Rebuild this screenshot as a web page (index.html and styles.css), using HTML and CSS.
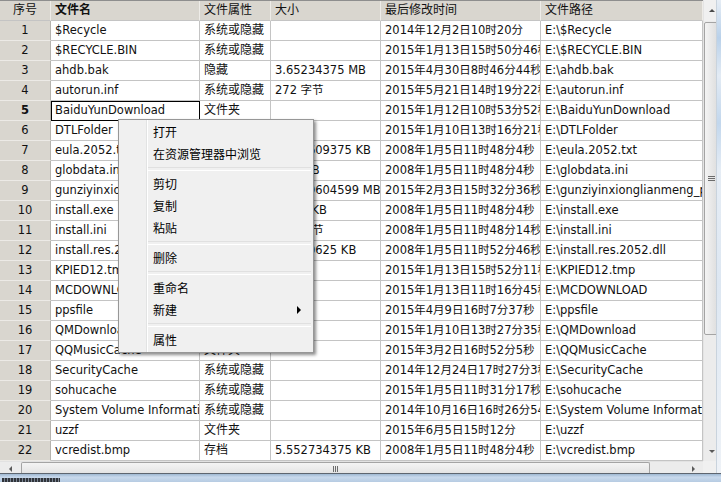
FILE: index.html
```html
<!DOCTYPE html>
<html lang="zh-CN">
<head>
<meta charset="utf-8">
<title>文件列表</title>
<link rel="stylesheet" href="styles.css">
</head>
<body>
<div class="window">
  <div class="grid">
    <div class="row head">
      <div class="cell no">序号</div>
      <div class="cell name bold">文件名</div>
      <div class="cell">文件属性</div>
      <div class="cell">大小</div>
      <div class="cell">最后修改时间</div>
      <div class="cell">文件路径</div>
    </div>
    <div class="row"><div class="cell no">1</div><div class="cell">$Recycle</div><div class="cell attr">系统或隐藏</div><div class="cell"></div><div class="cell">2014年12月2日10时20分</div><div class="cell">E:\$Recycle</div></div>
    <div class="row"><div class="cell no">2</div><div class="cell">$RECYCLE.BIN</div><div class="cell attr">系统或隐藏</div><div class="cell"></div><div class="cell">2015年1月13日15时50分46秒</div><div class="cell">E:\$RECYCLE.BIN</div></div>
    <div class="row"><div class="cell no">3</div><div class="cell">ahdb.bak</div><div class="cell attr">隐藏</div><div class="cell">3.65234375 MB</div><div class="cell">2015年4月30日8时46分44秒</div><div class="cell">E:\ahdb.bak</div></div>
    <div class="row"><div class="cell no">4</div><div class="cell">autorun.inf</div><div class="cell attr">系统或隐藏</div><div class="cell">272 字节</div><div class="cell">2015年5月21日14时19分22秒</div><div class="cell">E:\autorun.inf</div></div>
    <div class="row"><div class="cell no bold">5</div><div class="cell focus">BaiduYunDownload</div><div class="cell attr">文件夹</div><div class="cell"></div><div class="cell">2015年1月12日10时53分52秒</div><div class="cell">E:\BaiduYunDownload</div></div>
    <div class="row"><div class="cell no">6</div><div class="cell">DTLFolder</div><div class="cell attr">文件夹</div><div class="cell"></div><div class="cell">2015年1月10日13时16分21秒</div><div class="cell">E:\DTLFolder</div></div>
    <div class="row"><div class="cell no">7</div><div class="cell">eula.2052.txt</div><div class="cell attr">存档</div><div class="cell">2.512609375 KB</div><div class="cell">2008年1月5日11时48分4秒</div><div class="cell">E:\eula.2052.txt</div></div>
    <div class="row"><div class="cell no">8</div><div class="cell">globdata.ini</div><div class="cell attr">存档</div><div class="cell">3.12 KB</div><div class="cell">2008年1月5日11时48分4秒</div><div class="cell">E:\globdata.ini</div></div>
    <div class="row"><div class="cell no">9</div><div class="cell">gunziyinxionglianmeng_pc.exe</div><div class="cell attr">存档</div><div class="cell">4.8729604599 MB</div><div class="cell">2015年2月3日15时32分36秒</div><div class="cell">E:\gunziyinxionglianmeng_pc.exe</div></div>
    <div class="row"><div class="cell no">10</div><div class="cell">install.exe</div><div class="cell attr">存档</div><div class="cell">136.5 KB</div><div class="cell">2008年1月5日11时48分4秒</div><div class="cell">E:\install.exe</div></div>
    <div class="row"><div class="cell no">11</div><div class="cell">install.ini</div><div class="cell attr">存档</div><div class="cell">194 字节</div><div class="cell">2008年1月5日11时48分14秒</div><div class="cell">E:\install.ini</div></div>
    <div class="row"><div class="cell no">12</div><div class="cell">install.res.2052.dll</div><div class="cell attr">存档</div><div class="cell">1.0390625 KB</div><div class="cell">2008年1月5日11时52分46秒</div><div class="cell">E:\install.res.2052.dll</div></div>
    <div class="row"><div class="cell no">13</div><div class="cell">KPIED12.tmp</div><div class="cell attr">存档</div><div class="cell"></div><div class="cell">2015年1月13日15时52分11秒</div><div class="cell">E:\KPIED12.tmp</div></div>
    <div class="row"><div class="cell no">14</div><div class="cell">MCDOWNLOAD</div><div class="cell attr">文件夹</div><div class="cell"></div><div class="cell">2015年1月13日11时16分45秒</div><div class="cell">E:\MCDOWNLOAD</div></div>
    <div class="row"><div class="cell no">15</div><div class="cell">ppsfile</div><div class="cell attr">文件夹</div><div class="cell"></div><div class="cell">2015年4月9日16时7分37秒</div><div class="cell">E:\ppsfile</div></div>
    <div class="row"><div class="cell no">16</div><div class="cell">QMDownload</div><div class="cell attr">文件夹</div><div class="cell"></div><div class="cell">2015年1月10日13时27分35秒</div><div class="cell">E:\QMDownload</div></div>
    <div class="row"><div class="cell no">17</div><div class="cell">QQMusicCache</div><div class="cell attr">文件夹</div><div class="cell"></div><div class="cell">2015年3月2日16时52分5秒</div><div class="cell">E:\QQMusicCache</div></div>
    <div class="row"><div class="cell no">18</div><div class="cell">SecurityCache</div><div class="cell attr">系统或隐藏</div><div class="cell"></div><div class="cell">2014年12月24日17时27分3秒</div><div class="cell">E:\SecurityCache</div></div>
    <div class="row"><div class="cell no">19</div><div class="cell">sohucache</div><div class="cell attr">系统或隐藏</div><div class="cell"></div><div class="cell">2015年1月5日11时31分17秒</div><div class="cell">E:\sohucache</div></div>
    <div class="row"><div class="cell no">20</div><div class="cell">System Volume Information</div><div class="cell attr">系统或隐藏</div><div class="cell"></div><div class="cell">2014年10月16日16时26分54秒</div><div class="cell">E:\System Volume Information</div></div>
    <div class="row"><div class="cell no">21</div><div class="cell">uzzf</div><div class="cell attr">文件夹</div><div class="cell"></div><div class="cell">2015年6月5日15时12分</div><div class="cell">E:\uzzf</div></div>
    <div class="row"><div class="cell no">22</div><div class="cell">vcredist.bmp</div><div class="cell attr">存档</div><div class="cell">5.552734375 KB</div><div class="cell">2008年1月5日11时48分4秒</div><div class="cell">E:\vcredist.bmp</div></div>
  </div>

  <div class="vscroll">
    <div class="vbtn"><span class="tri up"></span></div>
    <div class="vtrack">
      <div class="vthumb"><span class="grip-h"></span><span class="grip-h"></span><span class="grip-h"></span></div>
    </div>
    <div class="vbtn down"><span class="tri dn"></span></div>
  </div>

  <div class="frame-right"></div>

  <div class="hscroll">
    <div class="hbtn"><span class="tri lf"></span></div>
    <div class="hthumb"><span class="grip-v"></span><span class="grip-v"></span><span class="grip-v"></span></div>
    <div class="htrack"></div>
    <div class="hbtn"><span class="tri rt"></span></div>
  </div>
  <div class="corner"></div>

  <div class="frame-bottom"><div class="frame-dark"></div></div>

  <div class="menu">
    <div class="item">打开</div>
    <div class="item">在资源管理器中浏览</div>
    <div class="sep"></div>
    <div class="item">剪切</div>
    <div class="item">复制</div>
    <div class="item">粘贴</div>
    <div class="sep"></div>
    <div class="item">删除</div>
    <div class="sep"></div>
    <div class="item">重命名</div>
    <div class="item sub">新建<span class="tri sub-arrow"></span></div>
    <div class="sep"></div>
    <div class="item">属性</div>
  </div>
</div>
</body>
</html>
```

FILE: styles.css
```css
* { box-sizing: border-box; }

html, body {
  margin: 0;
  padding: 0;
  background: #ffffff;
}

body {
  font-family: "DejaVu Sans", "Noto Sans CJK SC", sans-serif;
  font-size: 11.5px;
  color: #111;
}

.window {
  position: relative;
  width: 721px;
  height: 482px;
  overflow: hidden;
  display: grid;
  grid-template-columns: 703px 13px 5px;
  grid-template-rows: 461px 12px 9px;
}

/* ---------- data grid ---------- */
.grid {
  grid-column: 1;
  grid-row: 1;
  overflow: hidden;
  background: #fff;
}

.row {
  display: grid;
  grid-template-columns: 51px 149px 71px 110px 160px 162px;
  height: 20px;
}

.cell {
  border-right: 1px solid #c4c4c4;
  border-bottom: 1px solid #c4c4c4;
  padding-left: 4px;
  white-space: nowrap;
  overflow: hidden;
  line-height: 19px;
  background: #fff;
}

.cell.attr {
  font-size: 12px;
}

.cell.no {
  background: #d9d6cf;
  text-align: center;
  padding-left: 0;
  border-right: 1px solid #b5b3ae;
  border-bottom: 1px solid #eceae6;
}

.bold { font-weight: bold; }

.cell.focus {
  outline: 1px solid #000;
  outline-offset: -1px;
}

.row.head {
  height: 21px;
  border-top: 1px solid #8e8e8e;
}

.row.head .cell {
  background: #d9d6cf;
  font-size: 12px;
  line-height: 19px;
  border-right: 1px solid #eeece8;
  border-bottom: 1px solid #c4c4c4;
}

.row.head .cell.no {
  border-right: 1px solid #eeece8;
}

/* ---------- triangles ---------- */
.tri {
  display: block;
  width: 0;
  height: 0;
  border-style: solid;
  border-color: transparent;
}
.tri.up { border-width: 0 3px 3px 3px; border-bottom-color: #4a4a4a; }
.tri.dn { border-width: 3px 3px 0 3px; border-top-color: #5a5a5a; }
.tri.lf { border-width: 3px 3px 3px 0; border-right-color: #5a5a5a; }
.tri.rt { border-width: 3px 0 3px 3px; border-left-color: #5a5a5a; }

/* ---------- vertical scrollbar ---------- */
.vscroll {
  grid-column: 2;
  grid-row: 1;
  display: flex;
  flex-direction: column;
  background: #ececec;
  border-left: 1px solid #e4e4e4;
  overflow: hidden;
}

.vbtn {
  height: 21px;
  flex: none;
  display: flex;
  align-items: center;
  padding-left: 5px;
  background: #f0f0f0;
}
.vbtn.down {
  height: 20px;
  background: #ececec;
}

.vtrack {
  flex: 1;
  padding-top: 1px;
}

.vthumb {
  height: 313px;
  width: 17px;
  border: 1px solid #a4a4a4;
  border-radius: 2px;
  background: linear-gradient(to right, #f4f4f4, #e6e6e6 50%, #dadada);
  display: flex;
  flex-direction: column;
  justify-content: center;
  align-items: flex-start;
  gap: 1px;
  padding-left: 3px;
}

.grip-h {
  display: block;
  width: 7px;
  height: 1px;
  background: #6c6c6c;
}

/* ---------- right frame ---------- */
.frame-right {
  grid-column: 3;
  grid-row: 1 / span 2;
  background: linear-gradient(to bottom, #e6edf5 0%, #b9d1ea 8%, #e3ebf4 16%, #c2d7ed 26%, #e6edf5 36%, #dde7f2 60%, #eef2f7 100%);
  border-left: 1px solid #c9d3dd;
}

/* ---------- horizontal scrollbar ---------- */
.hscroll {
  grid-column: 1;
  grid-row: 2;
  display: flex;
  align-items: stretch;
  background: #ececec;
  border-top: 1px solid #e2e2e2;
}

.hbtn {
  width: 20px;
  flex: none;
  display: flex;
  align-items: center;
  justify-content: center;
  padding-top: 2px;
}

.hthumb {
  width: 629px;
  flex: none;
  margin-left: 1px;
  border: 1px solid #a4a4a4;
  border-bottom: none;
  border-radius: 2px 2px 0 0;
  background: linear-gradient(to bottom, #f4f4f4, #e4e4e4);
  display: flex;
  justify-content: center;
  align-items: flex-start;
  gap: 1px;
  padding-top: 3px;
}

.grip-v {
  display: block;
  width: 1px;
  height: 6px;
  background: #6c6c6c;
}

.htrack { flex: 1; }

.corner {
  grid-column: 2;
  grid-row: 2;
  background: #f0f0f0;
}

/* ---------- bottom frame ---------- */
.frame-bottom {
  grid-column: 1 / span 3;
  grid-row: 3;
  border-top: 1px solid #5e6670;
  background: linear-gradient(to bottom, #9fb8d2, #c8d9ec 40%, #b6cbe2);
  display: flex;
  align-items: flex-end;
}

.frame-dark {
  width: 58px;
  height: 4px;
  margin-left: 2px;
  background: repeating-linear-gradient(to right, #30343a 0 2px, #7a8594 2px 3px);
}

/* ---------- context menu ---------- */
.menu {
  position: absolute;
  left: 118px;
  top: 119px;
  width: 196px;
  padding: 1px;
  background:
    linear-gradient(to right, transparent 27px, #e2e3e3 27px, #e2e3e3 28px, #ffffff 28px, #ffffff 29px, transparent 29px),
    #f0f0f0;
  border: 1px solid #979797;
  box-shadow: 2px 2px 3px rgba(0, 0, 0, 0.45);
  font-family: "Noto Sans CJK SC", "DejaVu Sans", sans-serif;
  font-size: 12px;
  color: #000;
}

.item {
  height: 22px;
  line-height: 22px;
  padding-left: 33px;
  padding-right: 11px;
  display: flex;
  align-items: center;
  justify-content: space-between;
}

.sub-arrow {
  border-width: 4px 0 4px 4px;
  border-left-color: #000;
}

.sep {
  height: 8px;
  display: flex;
  align-items: center;
  padding-left: 28px;
  padding-right: 1px;
}

.sep::before {
  content: "";
  flex: 1;
  height: 2px;
  border-top: 1px solid #e0e0e0;
  border-bottom: 1px solid #ffffff;
}
```
